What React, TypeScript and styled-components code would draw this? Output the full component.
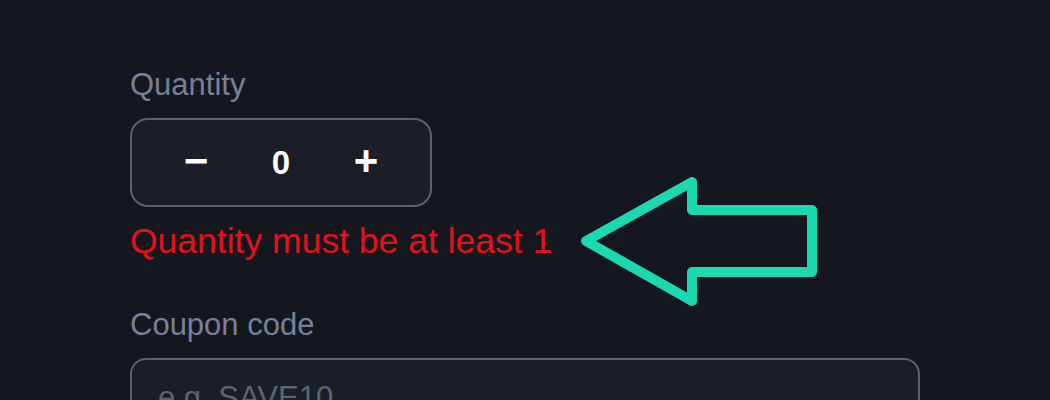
import styled, { createGlobalStyle } from "styled-components";

const GlobalStyle = createGlobalStyle`
  html, body {
    margin: 0;
    padding: 0;
    background: #15171e;
  }

  body {
    font-family: "Liberation Sans", Arial, sans-serif;
    overflow: hidden;
  }
`;

const Page = styled.div`
  width: 1050px;
  height: 400px;
  box-sizing: border-box;
  padding: 67px 0 0 130px;
  background: #15171e;
`;

const Field = styled.div`
  display: flex;
  flex-direction: column;
  align-items: flex-start;
`;

const Label = styled.label`
  font-size: 31px;
  line-height: 36px;
  color: #77809a;
  margin-bottom: 15px;
`;

const Stepper = styled.div`
  display: flex;
  align-items: center;
  box-sizing: border-box;
  width: 302px;
  height: 89px;
  padding: 0 32px;
  border: 2px solid #5b6170;
  border-radius: 18px;
  background: #1b1e26;
`;

const StepButton = styled.button`
  display: flex;
  align-items: center;
  justify-content: center;
  width: 64px;
  height: 100%;
  padding: 0 0 4px;
  border: none;
  background: transparent;
  color: #ffffff;
  font-family: "Liberation Sans", Arial, sans-serif;
  font-size: 42px;
  font-weight: 700;
  line-height: 1;
  cursor: pointer;
`;

const Value = styled.span`
  flex: 1;
  text-align: center;
  color: #ffffff;
  font-size: 33px;
  font-weight: 700;
  line-height: 1;
`;

const ErrorRow = styled.div`
  position: relative;
  margin-top: 14px;
`;

const ErrorText = styled.div`
  font-size: 35.5px;
  line-height: 40px;
  color: #e3121a;
`;

const Pointer = styled.svg`
  position: absolute;
  left: 440px;
  top: -51px;
  overflow: visible;
`;

const CouponField = styled(Field)`
  margin-top: 46px;
`;

const TextInput = styled.input`
  box-sizing: border-box;
  width: 790px;
  height: 80px;
  padding: 0 26px;
  border: 2px solid #5b6170;
  border-radius: 16px;
  background: #1b1e26;
  color: #ffffff;
  font-family: "Liberation Sans", Arial, sans-serif;
  font-size: 31px;
  outline: none;

  &::placeholder {
    color: #5d6372;
  }
`;

const App = () => {
  const quantity = 0;

  return (
    <Page>
      <GlobalStyle />
      <Field>
        <Label>Quantity</Label>
        <Stepper>
          <StepButton type="button">−</StepButton>
          <Value>{quantity}</Value>
          <StepButton type="button">+</StepButton>
        </Stepper>
      </Field>

      <ErrorRow>
        <ErrorText>Quantity must be at least 1</ErrorText>
        <Pointer width="260" height="145" viewBox="0 0 260 145">
          <path
            d="M16 71 L122 12 L122 40 L242 40 L242 102 L122 102 L122 131 Z"
            fill="none"
            stroke="#1ad8b0"
            strokeWidth="10"
            strokeLinejoin="round"
          />
        </Pointer>
      </ErrorRow>

      <CouponField>
        <Label>Coupon code</Label>
        <TextInput placeholder="e.g. SAVE10" />
      </CouponField>
    </Page>
  );
};

export default App;
